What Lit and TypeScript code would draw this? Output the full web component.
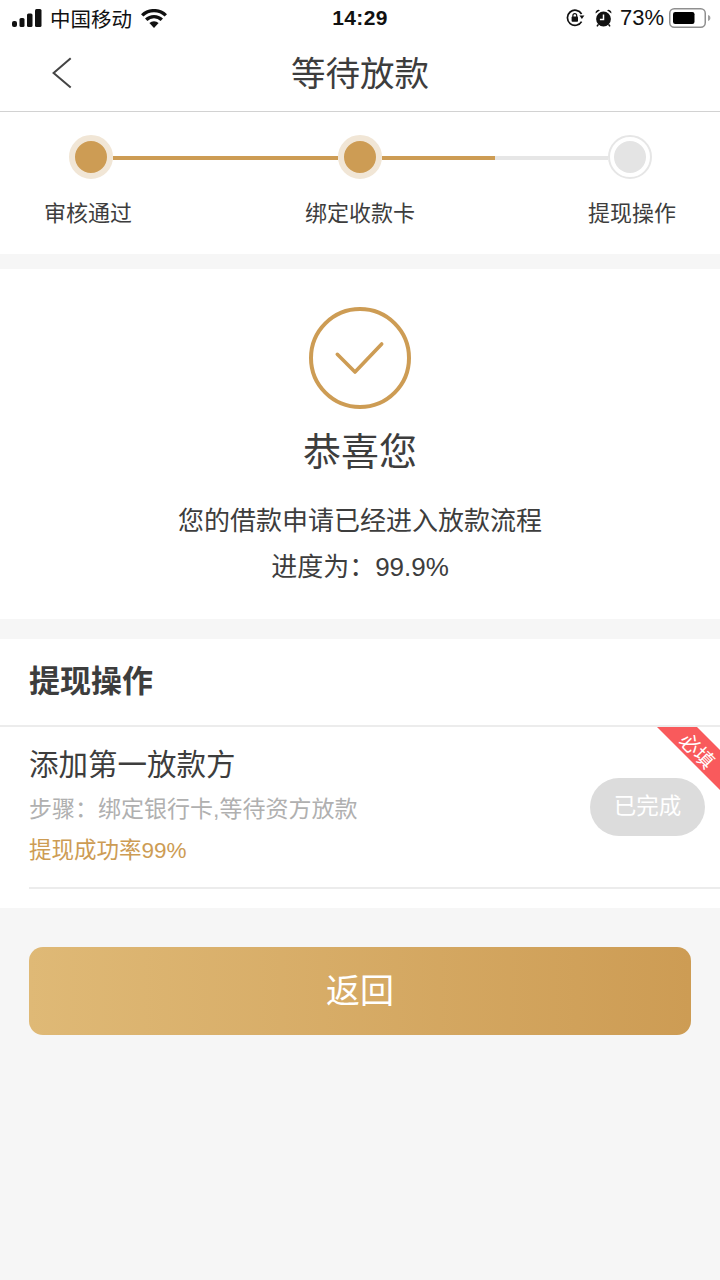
// app.ts
import { LitElement, html, css, svg } from 'lit';
import { customElement } from 'lit/decorators.js';

const STEPS = ['审核通过', '绑定收款卡', '提现操作'];

@customElement('app-root')
export class AppRoot extends LitElement {
  static styles = css`
    :host {
      display: block;
      min-height: 1280px;
      background: #f6f6f6;
      color: #3d3d3d;
      font-family: "Liberation Sans", "Noto Sans CJK SC", sans-serif;
    }
    svg { display: block; }

    .top { background: #fff; border-bottom: 1px solid #d2d2d2; }
    .status {
      display: grid;
      grid-template-columns: 1fr auto 1fr;
      align-items: center;
      height: 36px;
      color: #111;
    }
    .status-left { display: flex; align-items: center; padding-left: 12px; font-size: 20.5px; }
    .carrier { margin: 0 9px 0 8px; }
    .time { font-size: 21px; font-weight: 700; letter-spacing: 0.4px; }
    .status-right { display: flex; align-items: center; justify-content: flex-end; padding-right: 9px; font-size: 22px; }
    .pct { margin: 0 5px 0 8px; }
    .alarm { margin-left: 10px; }

    .nav { position: relative; display: flex; align-items: center; justify-content: center; height: 75px; }
    .back { position: absolute; left: 50px; top: 20px; }
    .title { font-size: 34.5px; line-height: 70px; }

    .steps { background: #fff; padding: 23px 0 25px; }
    .track { display: flex; align-items: center; padding: 0 68.5px; }
    .node {
      flex: none;
      box-sizing: border-box;
      width: 44px;
      height: 44px;
      border-radius: 50%;
      border: 6px solid #f1e6d6;
      background: #cd9c54;
    }
    .node.todo { border: 2px solid #e6e6e6; background: #fff; display: flex; align-items: center; justify-content: center; }
    .node.todo i { display: block; width: 32px; height: 32px; border-radius: 50%; background: #e4e4e4; }
    .line { flex: 1; height: 4px; margin-top: 2px; background: #e6e6e6; }
    .fill { height: 100%; background: #cd9c54; }
    .labels {
      display: flex;
      justify-content: space-between;
      padding: 0 44px;
      margin-top: 20px;
      font-size: 22px;
      line-height: 30px;
    }

    .result {
      background: #fff;
      margin-top: 15px;
      padding: 38px 0 29px;
      text-align: center;
    }
    .result svg { margin: 0 auto; }
    .congrats { margin-top: 18px; font-size: 38px; line-height: 50px; }
    .desc { margin-top: 21px; font-size: 26px; line-height: 46px; }

    .panel { background: #fff; margin-top: 20px; padding-bottom: 19px; }
    .panel-head {
      height: 86px;
      line-height: 86px;
      padding-left: 29px;
      font-size: 31px;
      font-weight: 700;
      border-bottom: 2px solid #ececec;
    }
    .item { position: relative; overflow: hidden; }
    .item-body {
      display: flex;
      justify-content: space-between;
      align-items: flex-start;
      margin-left: 29px;
      padding: 18px 15px 16px 0;
      border-bottom: 2px solid #ececec;
    }
    .item-name { font-size: 29.5px; line-height: 40px; }
    .item-step { margin-top: 4px; font-size: 23px; line-height: 40px; color: #b0b0b0; }
    .item-rate { margin-top: 2px; font-size: 22.5px; line-height: 40px; color: #cd9c54; }
    .done {
      margin-top: 33px;
      width: 115px;
      height: 58px;
      border-radius: 29px;
      background: #dcdcdc;
      color: #fff;
      font-size: 22.5px;
      line-height: 58px;
      text-align: center;
    }
    .ribbon {
      position: absolute;
      top: 0;
      right: 0;
      width: 63px;
      height: 63px;
      background: #f95a5c;
      clip-path: polygon(0 0, 40px 0, 100% 23px, 100% 100%);
    }
    .ribbon span {
      position: absolute;
      left: 18px;
      top: 12px;
      width: 44px;
      line-height: 24px;
      text-align: center;
      font-size: 20px;
      color: #fff;
      transform: rotate(45deg);
    }

    .submit {
      margin: 39px 29px 0;
      height: 88px;
      border-radius: 14px;
      background: linear-gradient(90deg, #dfb976, #cd9c54);
      color: #fff;
      font-size: 34px;
      line-height: 88px;
      text-align: center;
    }
  `;

  private signal() {
    return svg`<svg width="30" height="18" viewBox="0 0 30 18" fill="#111">
      <rect x="0" y="12" width="5" height="6" rx="2"/>
      <rect x="7.5" y="9" width="5" height="9" rx="1.5"/>
      <rect x="15" y="4.5" width="5.5" height="13.5" rx="1.5"/>
      <rect x="23" y="0" width="6.5" height="18" rx="1.5"/>
    </svg>`;
  }

  private wifi() {
    return svg`<svg width="26" height="19" viewBox="0 0 26 19" fill="none" stroke="#111" stroke-width="3.4">
      <path d="M1.2 6.4a17 17 0 0 1 23.6 0"/>
      <path d="M5.2 10.8a11.2 11.2 0 0 1 15.6 0"/>
      <path d="M13 19 8.4 14a6.8 6.8 0 0 1 9.2 0Z" fill="#111" stroke="none"/>
    </svg>`;
  }

  private lock() {
    return svg`<svg width="19" height="18" viewBox="0 0 19 18" fill="none" stroke="#111" stroke-width="1.7">
      <path d="M15.6 12.6A7.6 7.6 0 1 1 15.6 5"/>
      <path d="M13.4 6.5h5l-2.5 3.4Z" fill="#111" stroke="none"/>
      <rect x="5.6" y="7.6" width="6.4" height="5.2" rx="0.8" fill="#111" stroke="none"/>
      <path d="M6.9 8V6.6a1.9 1.9 0 0 1 3.8 0V8" stroke-width="1.2"/>
    </svg>`;
  }

  private alarm() {
    return svg`<svg class="alarm" width="17" height="18" viewBox="0 0 17 18" fill="#111">
      <circle cx="8.5" cy="10" r="7.4"/>
      <path d="M0.6 4.4a3 3 0 0 1 4.4-3.2ZM16.4 4.4a3 3 0 0 0-4.4-3.2Z"/>
      <path d="M3.4 15.4 2 17.4M13.6 15.4 15 17.4" stroke="#111" stroke-width="1.6"/>
      <path d="M8.5 5.4v5h-3.6" fill="none" stroke="#fff" stroke-width="1.5"/>
    </svg>`;
  }

  private battery() {
    return svg`<svg width="42" height="20" viewBox="0 0 42 20">
      <rect x="0.75" y="0.75" width="35.5" height="18.5" rx="4.5" fill="#fff" stroke="#8f8f8f" stroke-width="1.5"/>
      <rect x="4" y="4" width="21.5" height="12" rx="2.2" fill="#000"/>
      <path d="M39 7c1.6.4 2.4 1.6 2.4 3s-.8 2.6-2.4 3Z" fill="#a0a0a0"/>
    </svg>`;
  }

  render() {
    return html`
      <div class="top">
        <div class="status">
          <div class="status-left">
            ${this.signal()}<span class="carrier">中国移动</span>${this.wifi()}
          </div>
          <div class="time">14:29</div>
          <div class="status-right">
            ${this.lock()}${this.alarm()}<span class="pct">73%</span>${this.battery()}
          </div>
        </div>
        <div class="nav">
          <svg class="back" width="24" height="34" viewBox="0 0 24 34" fill="none" stroke="#444" stroke-width="2">
            <path d="M20.7 2.3 3.6 17l17.1 14.4"/>
          </svg>
          <div class="title">等待放款</div>
        </div>
      </div>

      <div class="steps">
        <div class="track">
          <div class="node"></div>
          <div class="line"><div class="fill" style="width: 100%"></div></div>
          <div class="node"></div>
          <div class="line"><div class="fill" style="width: 50%"></div></div>
          <div class="node todo"><i></i></div>
        </div>
        <div class="labels">${STEPS.map((s) => html`<span>${s}</span>`)}</div>
      </div>

      <div class="result">
        <svg width="102" height="102" viewBox="0 0 102 102" fill="none" stroke="#cd9c54" stroke-linecap="round" stroke-linejoin="round">
          <circle cx="51" cy="51" r="49" stroke-width="4"/>
          <path d="M28.3 47.3 46 65l26.7-28" stroke-width="3.6"/>
        </svg>
        <div class="congrats">恭喜您</div>
        <div class="desc">您的借款申请已经进入放款流程<br />进度为：99.9%</div>
      </div>

      <div class="panel">
        <div class="panel-head">提现操作</div>
        <div class="item">
          <div class="item-body">
            <div>
              <div class="item-name">添加第一放款方</div>
              <div class="item-step">步骤：绑定银行卡,等待资方放款</div>
              <div class="item-rate">提现成功率99%</div>
            </div>
            <div class="done">已完成</div>
          </div>
          <div class="ribbon"><span>必填</span></div>
        </div>
      </div>

      <div class="submit">返回</div>
    `;
  }
}
